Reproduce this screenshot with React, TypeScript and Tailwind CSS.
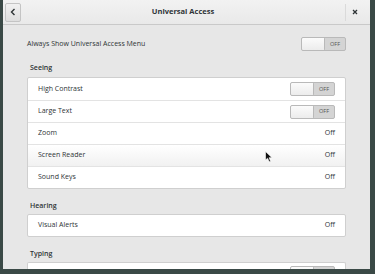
import React from "react";

const font = { fontFamily: '"Open Sans", "Noto Sans", sans-serif' };

function OffSwitch({ label = true }: { label?: boolean }) {
  return (
    <div className="flex h-[14px] w-[45px] shrink-0 overflow-hidden rounded-[2px] border border-[#b9b9b9] bg-[#d4d4d4]">
      <div className="h-full w-[23px] rounded-[1px] border-r border-[#b9b9b9] bg-gradient-to-b from-[#fbfbfb] to-[#ececec]" />
      <div className="flex flex-1 items-center justify-center text-[5.5px] text-[#555]">{label ? "OFF" : null}</div>
    </div>
  );
}

interface Row {
  label: string;
  value: "switch" | "off";
  hover?: boolean;
}

function Section({ title, rows, gap }: { title: string; rows: Row[]; gap: string }) {
  return (
    <div>
      <p className="h-[10px] pl-[3px] text-[7px] font-semibold leading-[10px] text-[#2e3436]">{title}</p>
      <div className={gap + " rounded-[2px] border border-[#cfcfcf] bg-white"}>
        {rows.map((row, i) => (
          <div
            key={row.label}
            className={
              "flex items-center justify-between pl-[10px] pr-[10px] " +
              (rows.length === 1 ? "h-[21px] " : "h-[22px] ") +
              (i > 0 ? "border-t border-[#e3e3e3] " : "") +
              (row.hover ? "bg-gradient-to-b from-[#ffffff] to-[#f1f1f1]" : "")
            }
          >
            <span className="text-[7px] text-[#2e3436]">{row.label}</span>
            {row.value === "switch" ? (
              <OffSwitch />
            ) : (
              <span className="text-[7px] text-[#2e3436]">Off</span>
            )}
          </div>
        ))}
      </div>
    </div>
  );
}

export default function App() {
  return (
    <div className="h-[274px] w-[375px] overflow-hidden bg-[#3a4946] pb-[5px] pl-[3px] pr-[5px]" style={font}>
      <div className="relative flex h-[269px] flex-col overflow-hidden bg-[#e7e7e7]">
        <div className="flex h-[25px] shrink-0 items-center border-b border-[#c9c9c9] bg-gradient-to-b from-[#f2f2f2] to-[#e9e9e9] pl-[2px] pr-[6px]">
          <button className="flex h-[19px] w-[16px] items-center justify-center rounded-[2px] border border-[#c4c4c4] bg-gradient-to-b from-[#f1f1f1] to-[#dedede]">
            <svg width="6" height="8" viewBox="0 0 6 8">
              <path d="M4.5 1 L1.5 4 L4.5 7" fill="none" stroke="#2e3436" strokeWidth="1.4" />
            </svg>
          </button>
          <p className="flex-1 text-center text-[7.5px] font-bold text-[#2e3436]">Universal Access</p>
          <div className="h-[17px] w-px bg-[#dadada]" />
          <div className="flex w-[18px] items-center justify-center">
            <svg width="6" height="6" viewBox="0 0 6 6">
              <path d="M1 1 L5 5 M5 1 L1 5" stroke="#2e3436" strokeWidth="1.3" />
            </svg>
          </div>
        </div>

        <div className="flex flex-col px-[24px] pt-[12px]">
          <div className="flex h-[14px] items-center justify-between">
            <span className="text-[7px] text-[#2e3436]">Always Show Universal Access Menu</span>
            <OffSwitch />
          </div>

          <div className="mt-[12px]">
            <Section
              title="Seeing"
              gap="mt-[4px]"
              rows={[
                { label: "High Contrast", value: "switch" },
                { label: "Large Text", value: "switch" },
                { label: "Zoom", value: "off" },
                { label: "Screen Reader", value: "off", hover: true },
                { label: "Sound Keys", value: "off" },
              ]}
            />
          </div>

          <div className="mt-[12px]">
            <Section title="Hearing" gap="mt-[3px]" rows={[{ label: "Visual Alerts", value: "off" }]} />
          </div>

          <div className="mt-[12px]">
            <p className="h-[10px] pl-[3px] text-[7px] font-semibold leading-[10px] text-[#2e3436]">Typing</p>
            <div className="mt-[3px] flex h-[20px] justify-end rounded-t-[2px] border border-b-0 border-[#cfcfcf] bg-white pr-[10px] pt-[3px]">
              <OffSwitch label={false} />
            </div>
          </div>
        </div>

        <svg className="absolute left-[262px] top-[151px]" width="8" height="12" viewBox="0 0 8 12">
          <path d="M0.5 0.5 L0.5 9 L2.6 7.2 L4.2 10.8 L5.6 10.2 L4.1 6.7 L7 6.7 Z" fill="#111" stroke="#fff" strokeWidth="0.6" />
        </svg>
      </div>
    </div>
  );
}
